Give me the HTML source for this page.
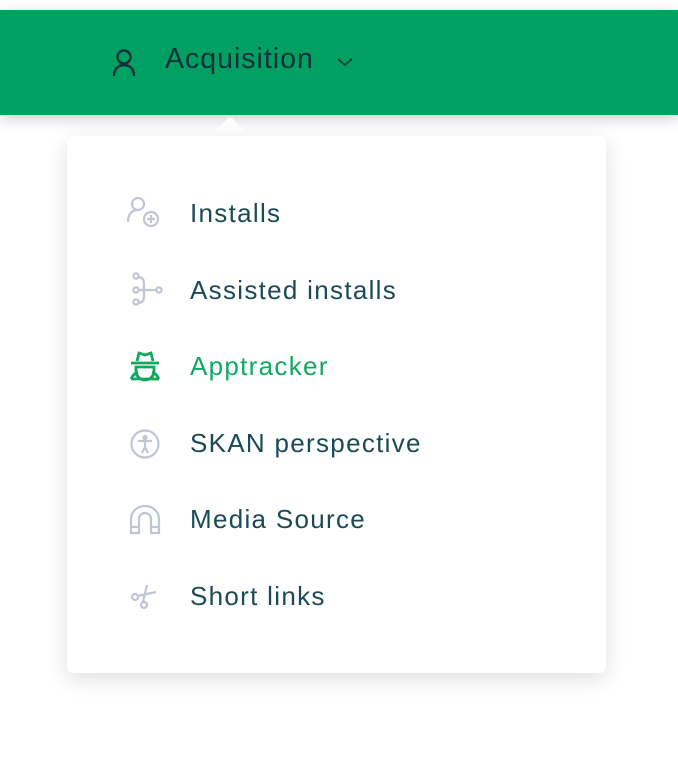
<!DOCTYPE html><html><head><style>
body{margin:0;width:678px;height:758px;background:#fff;position:relative;overflow:hidden;font-family:"Liberation Sans",sans-serif}
.bar{position:absolute;left:0;top:10px;width:678px;height:105px;background:#00a062;box-shadow:0 4px 14px rgba(0,0,0,.18)}
.hd{position:absolute;left:165px;top:43px;font-size:28.5px;letter-spacing:1px;color:#10313a}
.menu{position:absolute;left:67px;top:136px;width:539px;height:537px;background:#fff;border-radius:6px;box-shadow:0 6px 22px rgba(0,0,0,.13)}
.ptr{position:absolute;left:216px;top:122px;width:28px;height:28px;background:#fff;transform:rotate(45deg);border-radius:4px}
.it{position:absolute;left:190px;font-size:26px;letter-spacing:1.3px;color:#1b4a57;line-height:30px}
svg{position:absolute}
</style></head><body>
<div class="bar"></div>
<svg style="left:110px;top:46px" width="28" height="32" viewBox="0 0 28 32" fill="none" stroke="#10313a" stroke-width="2.4"><circle cx="14" cy="11" r="6.5"/><path d="M4 30c0-7 4-11 10-11s10 4 10 11"/></svg>
<div class="hd">Acquisition</div>
<svg style="left:336px;top:56px" width="18" height="12" viewBox="0 0 18 12" fill="none" stroke="#10313a" stroke-width="1.6"><path d="M2 3l7 6 7-6"/></svg>
<div class="ptr"></div>
<div class="menu"></div>
<svg style="left:126px;top:195px" width="36" height="36" viewBox="0 0 36 36" fill="none" stroke="#c0c5d4" stroke-width="2.2"><circle cx="12" cy="9" r="6"/><path d="M2 27c0-8 4-12 10-12"/><circle cx="25" cy="24" r="7"/><path d="M25 20v8M21 24h8"/></svg>
<svg style="left:130px;top:272px" width="36" height="36" viewBox="0 0 36 36" fill="none" stroke="#c0c5d4" stroke-width="2.2"><circle cx="6" cy="4" r="2.6"/><circle cx="6" cy="18" r="2.6"/><circle cx="6" cy="30" r="2.6"/><circle cx="29" cy="18" r="2.6"/><path d="M8.6 18h18M9 5c5 1 5 4 5 8v10c0 4 0 7-5 8"/></svg>
<svg style="left:128px;top:350px" width="34" height="32" viewBox="0 0 34 32" fill="none" stroke="#12a861" stroke-width="2.8"><path d="M9 11l2-8 6 2 6-2 2 8M3 13h28"/><path d="M8 17h18v4a9 9 0 0 1-18 0z"/><path d="M3 29c2-4 4-6 7-7M31 29c-2-4-4-6-7-7M3 29h28"/></svg>
<svg style="left:129px;top:428px" width="32" height="32" viewBox="0 0 32 32" fill="none" stroke="#c0c5d4" stroke-width="2.2"><circle cx="16" cy="16" r="13.5"/><circle cx="16" cy="9.5" r="1.5" fill="#c0c5d4"/><path d="M9 13h14M16 13v6l-3 6M16 19l3 6"/></svg>
<svg style="left:129px;top:505px" width="32" height="30" viewBox="0 0 32 30" fill="none" stroke="#c0c5d4" stroke-width="2.2"><path d="M2 28V14a14 13 0 0 1 28 0v14h-8V14a6 6 0 0 0-12 0v14z"/><path d="M2 22h8M22 22h8"/></svg>
<svg style="left:130px;top:582px" width="30" height="30" viewBox="0 0 30 30" fill="none" stroke="#c0c5d4" stroke-width="2.2"><circle cx="5" cy="15" r="3"/><circle cx="14" cy="23" r="3"/><path d="M7.5 14L26 10M13 20l4-17"/></svg>
<div class="it" style="top:198px">Installs</div>
<div class="it" style="top:275px">Assisted installs</div>
<div class="it" style="top:351px;color:#12a861">Apptracker</div>
<div class="it" style="top:428px">SKAN perspective</div>
<div class="it" style="top:504px">Media Source</div>
<div class="it" style="top:581px">Short links</div>
</body></html>
